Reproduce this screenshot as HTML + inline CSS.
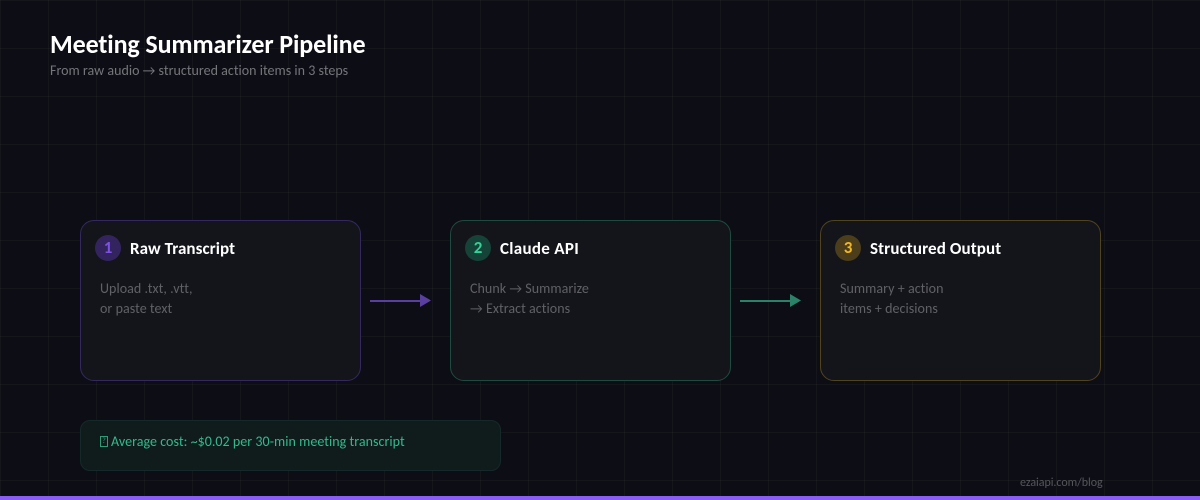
<!DOCTYPE html>
<html><head><meta charset="utf-8"><style>
*{margin:0;padding:0;box-sizing:border-box}
html,body{width:1200px;height:500px;overflow:hidden;background:#0d0d15}
body{position:relative;font-family:Carlito,Calibri,"Liberation Sans",sans-serif;}
.grid{position:absolute;inset:0;background-image:linear-gradient(#ffffff08 1px,transparent 1px),linear-gradient(90deg,#ffffff08 1px,transparent 1px);background-size:48px 48px}
.t{position:absolute;white-space:nowrap}
.card{position:absolute;top:220px;width:281px;height:161px;border-radius:14px;background:#14151a;border:1px solid}
.num{position:absolute;left:14px;top:14px;width:26px;height:26px;border-radius:50%;text-align:center;font-weight:700;font-size:17px;line-height:26px}
.h{position:absolute;left:49px;top:18px;font-size:17px;font-weight:700;color:#fff;white-space:nowrap;line-height:20px}
.d{position:absolute;left:19px;top:58px;font-size:14px;line-height:20px;color:#606167;white-space:nowrap;letter-spacing:.05px}
</style></head><body>
<div class="grid"></div>
<div class="t" style="left:50px;top:28px;font-size:26px;font-weight:700;color:#fff;line-height:32px;letter-spacing:-.11px">Meeting Summarizer Pipeline</div>
<div class="t" style="left:50px;top:62px;font-size:14px;color:#75767b;line-height:17px;letter-spacing:.02px">From raw audio → structured action items in 3 steps</div>

<div class="card" style="left:80px;border-color:#33295f"><div class="num" style="background:#33245f;color:#7c53e0">1</div><div class="h" style="letter-spacing:.07px">Raw Transcript</div><div class="d">Upload .txt, .vtt,<br>or paste text</div></div>
<div class="card" style="left:450px;border-color:#1f4a40"><div class="num" style="background:#154338;color:#34d399">2</div><div class="h" style="letter-spacing:.3px">Claude API</div><div class="d">Chunk → Summarize<br>→ Extract actions</div></div>
<div class="card" style="left:820px;border-color:#50431f"><div class="num" style="background:#4c3d1b;color:#f2b824">3</div><div class="h" style="letter-spacing:.12px">Structured Output</div><div class="d">Summary + action<br>items + decisions</div></div>

<svg style="position:absolute;left:0;top:0" width="1200" height="500">
<rect x="370" y="300" width="52" height="2" fill="#5b3fa0"/><polygon points="420,294 431,300.5 420,307" fill="#5b3fa0"/>
<rect x="740" y="300" width="52" height="2" fill="#2a8268"/><polygon points="790,294 801,300.5 790,307" fill="#2a8268"/>
</svg>

<div style="position:absolute;left:80px;top:420px;width:421px;height:51px;border-radius:10px;background:#101c1c;border:1px solid #15292a"></div>
<div class="t" style="left:100px;top:436px;width:8px;height:11px;border:1px solid #2f9c78;font-size:8px;line-height:9px;text-align:center;color:#2f9c78">?</div>
<div class="t" style="left:111px;top:433px;font-size:14px;line-height:17px;color:#34b98c;letter-spacing:.04px">Average cost: ~$0.02 per 30-min meeting transcript</div>
<div class="t" style="left:1020px;top:476px;font-size:12px;line-height:14px;color:#55565c;letter-spacing:-.04px">ezaiapi.com/blog</div>
<div style="position:absolute;left:0;top:496px;width:1200px;height:4px;background:#8b5cf6"></div>
</body></html>
